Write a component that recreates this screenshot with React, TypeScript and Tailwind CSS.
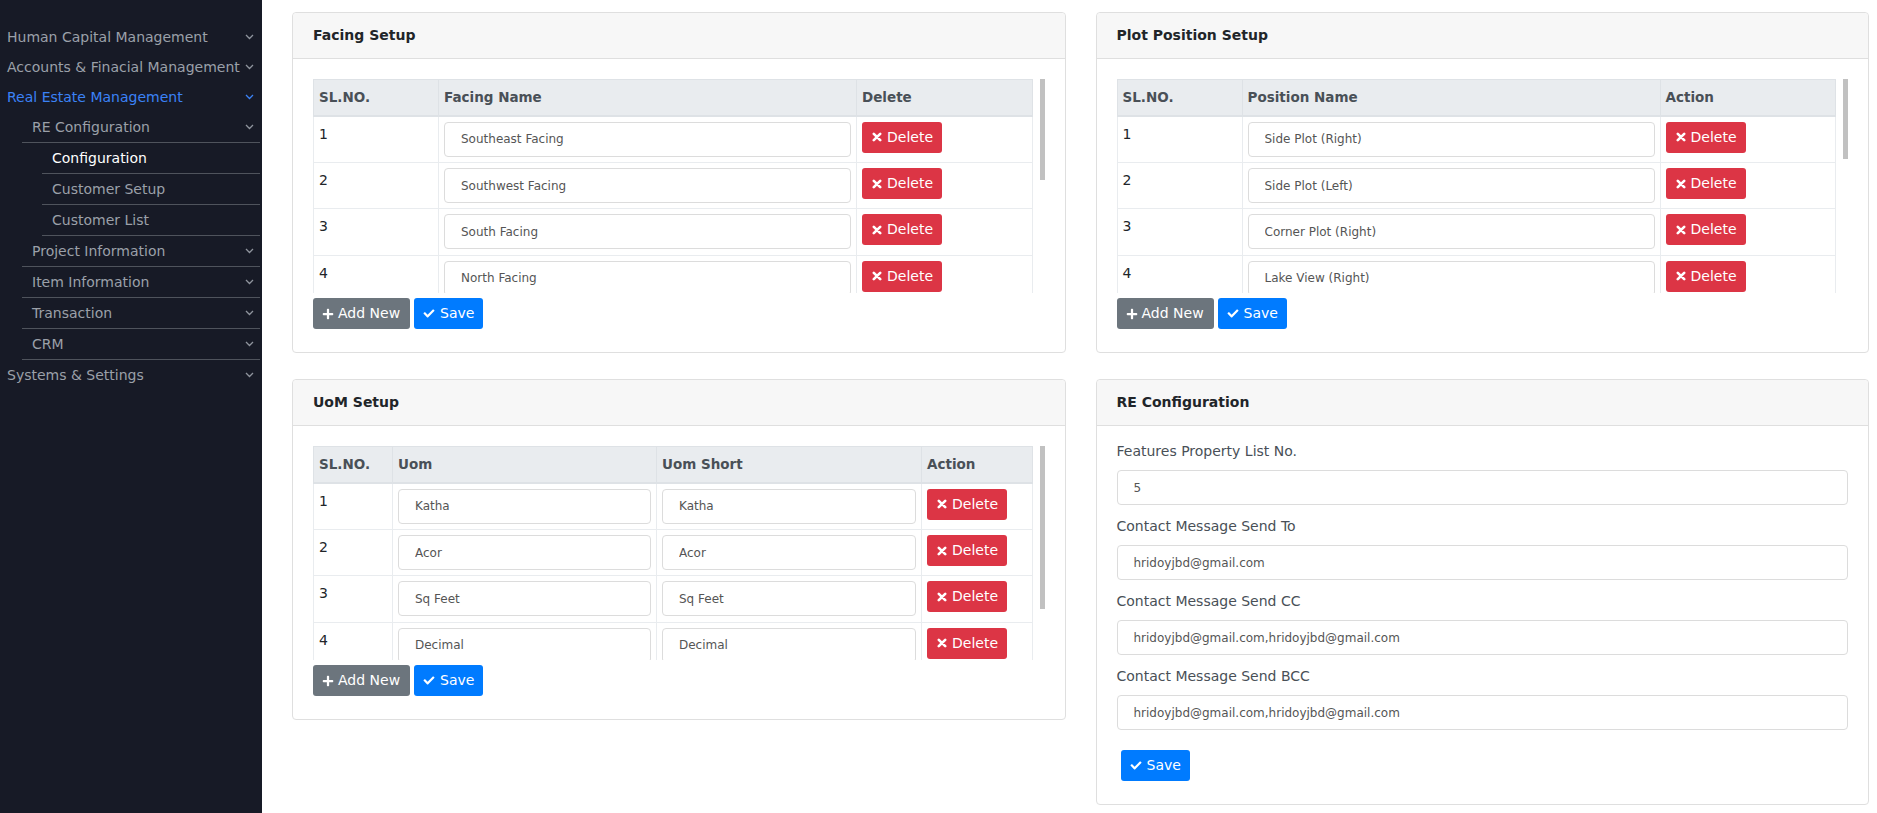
import { FaCheck, FaPlus } from 'react-icons/fa';

const font = "font-['DejaVu_Sans',sans-serif]";

function Chevron({ active }: { active?: boolean }) {
  return (
    <svg width="9" height="6" viewBox="0 0 9 6" fill="none" className={active ? 'text-[#3b82f6]' : 'text-[#8f949d]'}>
      <polyline points="1,1 4.5,4.5 8,1" stroke="currentColor" strokeWidth="1.3" />
    </svg>
  );
}

function TimesIcon() {
  return (
    <svg width="10" height="10" viewBox="0 0 10 10" fill="none">
      <path d="M1.8 1.8 L8.2 8.2 M8.2 1.8 L1.8 8.2" stroke="currentColor" strokeWidth="2.6" strokeLinecap="round" />
    </svg>
  );
}

function Sidebar() {
  const top = 'flex h-[30px] items-center justify-between pl-[7px] pr-[6px]';
  const sub = 'flex h-[31px] items-center justify-between border-b border-[#4f535c] pl-[10px] pr-[6px]';
  return (
    <nav className="w-[262px] shrink-0 bg-[#171a26] pt-[22px] text-[14px] text-[#9ba0a9]">
      <div className="pr-[2px]">
        <div className={top}>
          <span>Human Capital Management</span>
          <Chevron />
        </div>
        <div className={top}>
          <span>Accounts &amp; Finacial Management</span>
          <Chevron />
        </div>
        <div className={top + ' text-[#3b82f6]'}>
          <span>Real Estate Management</span>
          <Chevron active />
        </div>
        <div className="ml-[22px]">
          <div className={sub}>
            <span>RE Configuration</span>
            <Chevron />
          </div>
          <div className="ml-[20px]">
            <div className={sub + ' text-white'}>
              <span>Configuration</span>
            </div>
            <div className={sub}>
              <span>Customer Setup</span>
            </div>
            <div className={sub}>
              <span>Customer List</span>
            </div>
          </div>
          {['Project Information', 'Item Information', 'Transaction', 'CRM'].map((label) => (
            <div key={label} className={sub}>
              <span>{label}</span>
              <Chevron />
            </div>
          ))}
        </div>
        <div className={top}>
          <span>Systems &amp; Settings</span>
          <Chevron />
        </div>
      </div>
    </nav>
  );
}

function Card({ title, children, bodyClass }: { title: string; children: React.ReactNode; bodyClass?: string }) {
  return (
    <div className="rounded-[4px] border border-[#dfdfdf] bg-white">
      <div className="flex h-[46px] items-center rounded-t-[4px] border-b border-[#dfdfdf] bg-[#f7f7f7] px-[20px] text-[14px] font-bold text-[#212529]">
        {title}
      </div>
      <div className={bodyClass ?? 'px-[20px] pt-[20px] pb-[23px]'}>{children}</div>
    </div>
  );
}

function TextBox({ value }: { value: string }) {
  return (
    <input
      readOnly
      defaultValue={value}
      className="block h-[35px] w-full rounded-[4px] border border-[#dcdcdc] bg-white px-[16px] text-[12px] text-[#555] outline-none"
    />
  );
}

function DeleteButton() {
  return (
    <button className="inline-flex h-[31px] w-[80px] items-center gap-[5px] rounded-[3px] bg-[#dc3545] pl-[10px] text-[14px] text-white">
      <TimesIcon />
      Delete
    </button>
  );
}

function ActionButtons() {
  return (
    <div className="mt-[5px] flex gap-[4px]">
      <button className="inline-flex h-[31px] items-center gap-[4px] rounded-[3px] bg-[#6c757d] pr-[10px] pl-[9px] text-[14px] text-white">
        <FaPlus className="h-[12px] w-[12px]" />
        Add New
      </button>
      <SaveButton />
    </div>
  );
}

function SaveButton({ className }: { className?: string }) {
  return (
    <button
      className={
        'inline-flex h-[31px] items-center gap-[5px] rounded-[3px] bg-[#007bff] pr-[9px] pl-[9px] text-[14px] text-white ' +
        (className ?? '')
      }
    >
      <FaCheck className="h-[11px] w-[12px]" />
      Save
    </button>
  );
}

function ScrollTable({
  thumb,
  children,
}: {
  thumb: string;
  children: React.ReactNode;
}) {
  return (
    <div className="flex h-[214px]">
      <div className="min-w-0 flex-1 overflow-hidden">{children}</div>
      <div className="flex w-[12px] justify-end">
        <div className={'w-[5px] bg-[#c1c1c1] ' + thumb} />
      </div>
    </div>
  );
}

const th = 'h-[36px] border border-b-2 border-[#dee2e6] px-[5px] text-left text-[13.5px] font-bold text-[#495057]';
const td = 'border border-[#e9ecef] px-[5px] py-[5.2px] align-top';

function SingleTable({ nameHead, lastHead, rows }: { nameHead: string; lastHead: string; rows: string[] }) {
  return (
    <table className="w-full table-fixed border-collapse">
      <colgroup>
        <col className="w-[125px]" />
        <col className="w-[418px]" />
        <col />
      </colgroup>
      <thead className="bg-[#e9ecef]">
        <tr>
          <th className={th}>SL.NO.</th>
          <th className={th}>{nameHead}</th>
          <th className={th}>{lastHead}</th>
        </tr>
      </thead>
      <tbody className="text-[14px] text-[#212529]">
        {rows.map((name, i) => (
          <tr key={name}>
            <td className={td + ' leading-[24px]'}>{i + 1}</td>
            <td className={td}>
              <TextBox value={name} />
            </td>
            <td className={td}>
              <DeleteButton />
            </td>
          </tr>
        ))}
      </tbody>
    </table>
  );
}

const facings = [
  'Southeast Facing',
  'Southwest Facing',
  'South Facing',
  'North Facing',
  'Northeast Facing',
  'Northwest Facing',
  'East Facing',
  'West Facing',
  'Road Facing',
];

const positions = [
  'Side Plot (Right)',
  'Side Plot (Left)',
  'Corner Plot (Right)',
  'Lake View (Right)',
  'Lake View (Left)',
  'Corner Plot (Left)',
  'Middle Plot',
  'Park View (Right)',
  'Park View (Left)',
  'Road Side (Right)',
  'Road Side (Left)',
];

const uoms = [
  ['Katha', 'Katha'],
  ['Acor', 'Acor'],
  ['Sq Feet', 'Sq Feet'],
  ['Decimal', 'Decimal'],
  ['Bigha', 'Bigha'],
];

const configFields = [
  ['Features Property List No.', '5'],
  ['Contact Message Send To', 'hridoyjbd@gmail.com'],
  ['Contact Message Send CC', 'hridoyjbd@gmail.com,hridoyjbd@gmail.com'],
  ['Contact Message Send BCC', 'hridoyjbd@gmail.com,hridoyjbd@gmail.com'],
];

export default function App() {
  return (
    <div className={'flex min-h-screen bg-white ' + font}>
      <Sidebar />
      <main className="min-w-0 flex-1 pt-[12px] pr-[8px] pb-[8px] pl-[30px]">
        <div className="grid grid-cols-2 items-start gap-x-[30px] gap-y-[26px]">
          <Card title="Facing Setup">
            <ScrollTable thumb="h-[101px]">
              <SingleTable nameHead="Facing Name" lastHead="Delete" rows={facings} />
            </ScrollTable>
            <ActionButtons />
          </Card>

          <Card title="Plot Position Setup">
            <ScrollTable thumb="h-[80px]">
              <SingleTable nameHead="Position Name" lastHead="Action" rows={positions} />
            </ScrollTable>
            <ActionButtons />
          </Card>

          <Card title="UoM Setup">
            <ScrollTable thumb="h-[163px]">
              <table className="w-full table-fixed border-collapse">
                <colgroup>
                  <col className="w-[79px]" />
                  <col className="w-[264px]" />
                  <col className="w-[265px]" />
                  <col />
                </colgroup>
                <thead className="bg-[#e9ecef]">
                  <tr>
                    <th className={th}>SL.NO.</th>
                    <th className={th}>Uom</th>
                    <th className={th}>Uom Short</th>
                    <th className={th}>Action</th>
                  </tr>
                </thead>
                <tbody className="text-[14px] text-[#212529]">
                  {uoms.map(([uom, short], i) => (
                    <tr key={uom}>
                      <td className={td + ' leading-[24px]'}>{i + 1}</td>
                      <td className={td}>
                        <TextBox value={uom} />
                      </td>
                      <td className={td}>
                        <TextBox value={short} />
                      </td>
                      <td className={td}>
                        <DeleteButton />
                      </td>
                    </tr>
                  ))}
                </tbody>
              </table>
            </ScrollTable>
            <ActionButtons />
          </Card>

          <Card title="RE Configuration" bodyClass="px-[20px] pt-[15px] pb-[23px]">
            <div className="flex flex-col gap-[11px]">
              {configFields.map(([label, value]) => (
                <div key={label}>
                  <label className="mb-[8px] block text-[14px] leading-[21px] text-[#495057]">{label}</label>
                  <TextBox value={value} />
                </div>
              ))}
            </div>
            <SaveButton className="mt-[20px] ml-[4px]" />
          </Card>
        </div>
      </main>
    </div>
  );
}
